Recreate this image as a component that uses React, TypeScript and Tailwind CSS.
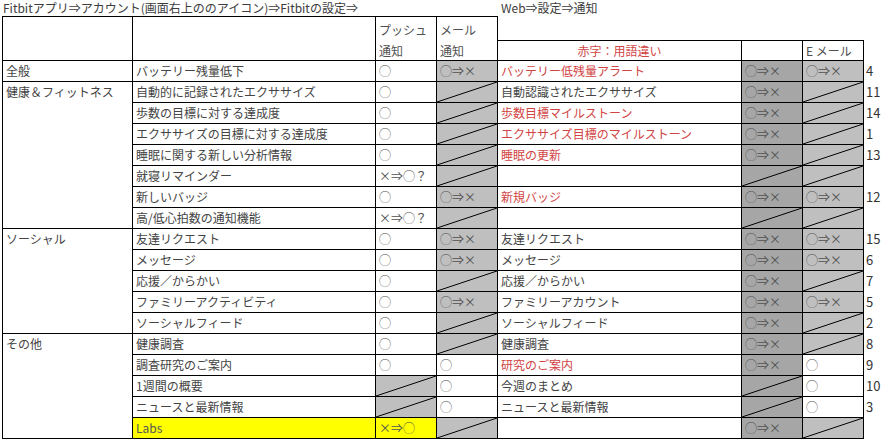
import React from 'react';

type Row = {
  item: string;
  c: string;
  d: string;
  e: string;
  red?: boolean;
  f: string;
  g: string;
  n: string;
  labs?: boolean;
};

type Group = { name: string; span: string; rows: Row[] };

// 'o' = ◯, 'x' = ◯⇒×, '/' = diagonal (not available)
const groups: Group[] = [
  {
    name: '全般',
    span: 'row-span-1',
    rows: [{ item: 'バッテリー残量低下', c: 'o', d: 'x', e: 'バッテリー低残量アラート', red: true, f: 'x', g: 'x', n: '4' }],
  },
  {
    name: '健康＆フィットネス',
    span: 'row-span-7',
    rows: [
      { item: '自動的に記録されたエクササイズ', c: 'o', d: '/', e: '自動認識されたエクササイズ', f: 'x', g: '/', n: '11' },
      { item: '歩数の目標に対する達成度', c: 'o', d: '/', e: '歩数目標マイルストーン', red: true, f: 'x', g: '/', n: '14' },
      { item: 'エクササイズの目標に対する達成度', c: 'o', d: '/', e: 'エクササイズ目標のマイルストーン', red: true, f: 'x', g: '/', n: '1' },
      { item: '睡眠に関する新しい分析情報', c: 'o', d: '/', e: '睡眠の更新', red: true, f: 'x', g: '/', n: '13' },
      { item: '就寝リマインダー', c: '×⇒◯？', d: '/', e: '', f: '/', g: '/', n: '' },
      { item: '新しいバッジ', c: 'o', d: 'x', e: '新規バッジ', red: true, f: 'x', g: 'x', n: '12' },
      { item: '高/低心拍数の通知機能', c: '×⇒◯？', d: '/', e: '', f: '/', g: '/', n: '' },
    ],
  },
  {
    name: 'ソーシャル',
    span: 'row-span-5',
    rows: [
      { item: '友達リクエスト', c: 'o', d: 'x', e: '友達リクエスト', f: 'x', g: 'x', n: '15' },
      { item: 'メッセージ', c: 'o', d: 'x', e: 'メッセージ', f: 'x', g: 'x', n: '6' },
      { item: '応援／からかい', c: 'o', d: '/', e: '応援／からかい', f: 'x', g: '/', n: '7' },
      { item: 'ファミリーアクティビティ', c: 'o', d: 'x', e: 'ファミリーアカウント', f: 'x', g: 'x', n: '5' },
      { item: 'ソーシャルフィード', c: 'o', d: '/', e: 'ソーシャルフィード', f: 'x', g: '/', n: '2' },
    ],
  },
  {
    name: 'その他',
    span: 'row-span-5',
    rows: [
      { item: '健康調査', c: 'o', d: '/', e: '健康調査', f: 'x', g: '/', n: '8' },
      { item: '調査研究のご案内', c: 'o', d: 'o', e: '研究のご案内', red: true, f: 'x', g: 'o', n: '9' },
      { item: '1週間の概要', c: '/', d: 'o', e: '今週のまとめ', f: '/', g: 'o', n: '10' },
      { item: 'ニュースと最新情報', c: '/', d: 'o', e: 'ニュースと最新情報', f: '/', g: 'o', n: '3' },
      { item: 'Labs', c: '×⇒◯', d: '/', e: '', f: 'x', g: '/', n: '', labs: true },
    ],
  },
];

function Slash() {
  return (
    <svg className="absolute inset-0 w-full h-full" viewBox="0 0 100 100" preserveAspectRatio="none">
      <line x1="0" y1="100" x2="100" y2="0" stroke="#000" strokeWidth="1" vectorEffect="non-scaling-stroke" />
    </svg>
  );
}

function Mark({ v, bg }: { v: string; bg: string }) {
  const text = v === 'o' ? '◯' : v === 'x' ? '◯⇒×' : v === '/' ? '' : v;
  return (
    <div className={`relative border-r border-b border-black pl-[3px] leading-[20px] text-[#505050] whitespace-nowrap ${bg}`}>
      {text}
      {v === '/' && <Slash />}
    </div>
  );
}

function cellBg(v: string) {
  return v === 'x' || v === '/' ? 'bg-[#bfbfbf]' : 'bg-white';
}

export default function App() {
  return (
    <div className="w-[882px] h-[439px] bg-white overflow-hidden pl-[2px] font-['Noto_Sans_CJK_JP','Noto_Sans',sans-serif] text-[12px] text-[#3c3c3c]">
      <div className="grid grid-cols-[131px_243px_61px_61px_244px_61px_61px_18px] grid-rows-[16px_24px_21px_repeat(18,21px)]">
        {/* title row */}
        <div className="col-span-4 pl-[1px] leading-[16px] whitespace-nowrap">
          Fitbitアプリ⇒アカウント(画面右上ののアイコン)⇒Fitbitの設定⇒
        </div>
        <div className="col-span-4 pl-[3px] leading-[16px] whitespace-nowrap">Web⇒設定⇒通知</div>

        {/* header */}
        <div className="row-span-2 border-l border-t border-r border-b border-black bg-white" />
        <div className="row-span-2 border-t border-r border-b border-black bg-white" />
        <div className="row-span-2 border-t border-r border-b border-black bg-white pl-[3px] pt-[2px] leading-[21px] text-[#505050]">
          <div>プッシュ</div>
          <div>通知</div>
        </div>
        <div className="row-span-2 border-t border-r border-b border-black bg-white pl-[3px] pt-[2px] leading-[21px] text-[#505050]">
          <div>メール</div>
          <div>通知</div>
        </div>
        <div />
        <div />
        <div />
        <div />
        <div className="border-t border-r border-b border-black text-center leading-[19px] text-[#d24444]">赤字：用語違い</div>
        <div className="border-t border-r border-b border-black" />
        <div className="border-t border-r border-b border-black pl-[3px] leading-[19px] text-[#505050]">E メール</div>
        <div />

        {groups.map((g) => (
          <React.Fragment key={g.name}>
            <div className={`${g.span} border-l border-r border-b border-black pl-[3px] leading-[20px] text-[#444]`}>{g.name}</div>
            {g.rows.map((r) => (
              <React.Fragment key={r.item}>
                <div
                  className={`border-r border-b border-black pl-[3px] leading-[20px] whitespace-nowrap ${
                    r.labs ? 'bg-[#ffff00] text-[#555]' : 'text-[#444]'
                  }`}
                >
                  {r.item}
                </div>
                <Mark v={r.c} bg={r.labs ? 'bg-[#ffff00]' : cellBg(r.c)} />
                <Mark v={r.d} bg={cellBg(r.d)} />
                <div
                  className={`border-r border-b border-black pl-[3px] leading-[20px] whitespace-nowrap ${
                    r.red ? 'text-[#d24444]' : 'text-[#444]'
                  }`}
                >
                  {r.e}
                </div>
                <Mark v={r.f} bg="bg-[#a6a6a6]" />
                <Mark v={r.g} bg={cellBg(r.g)} />
                <div className="pl-[2px] leading-[20px] text-[13px] text-[#333]">{r.n}</div>
              </React.Fragment>
            ))}
          </React.Fragment>
        ))}
      </div>
    </div>
  );
}
